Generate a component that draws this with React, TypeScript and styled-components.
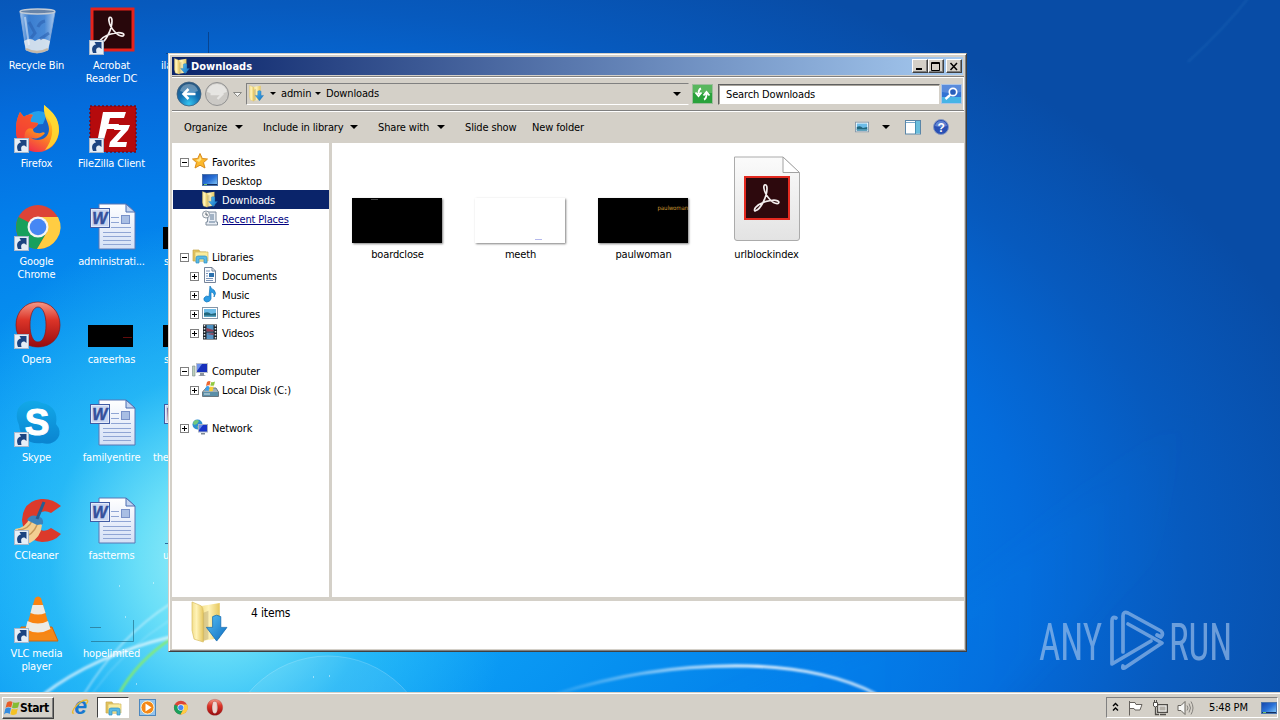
import React from "react";
import type { ReactNode } from "react";
import styled, { createGlobalStyle, css } from "styled-components";

const FACE = "#d4d0c8";
const NAVY = "#0a246a";

const GlobalStyle = createGlobalStyle`
  * {
    box-sizing: border-box;
  }
  body {
    margin: 0;
    overflow: hidden;
    font-family: "DejaVu Sans Condensed", "DejaVu Sans", sans-serif;
    font-stretch: condensed;
    font-size: 11px;
    letter-spacing: -0.15px;
    color: #000;
  }
  svg {
    display: block;
    flex: none;
    overflow: visible;
  }
`;

const raised = css`
  border: 1px solid;
  border-color: #fff #404040 #404040 #fff;
  box-shadow: inset -1px -1px 0 #808080;
`;

/* ---------- desktop ---------- */

const Screen = styled.div`
  position: relative;
  width: 1280px;
  height: 720px;
  overflow: hidden;
  display: flex;
  flex-direction: column;
  background:
    radial-gradient(ellipse 300px 340px at 215px 560px, rgba(165, 242, 248, 0.95) 0%, rgba(120, 232, 248, 0.85) 25%, rgba(60, 206, 246, 0.5) 55%, rgba(20, 170, 245, 0) 100%),
    radial-gradient(ellipse 1150px 660px at 220px 560px, #24b0f6 0%, #0ea2f8 20%, #0690f0 38%, #037eea 55%, #046cdc 70%, #075abe 84%, #084ca6 100%);
`;

const Wallpaper = styled.svg`
  position: absolute;
  left: 0;
  top: 0;
`;

const IconGrid = styled.div`
  position: relative;
  flex: 1;
  display: grid;
  grid-template-columns: repeat(3, 75px);
  grid-template-rows: repeat(7, 98px);
  grid-auto-flow: column;
  margin-left: -1px;
`;

const Shortcut = styled.div<{ $edge?: boolean }>`
  position: relative;
  display: flex;
  flex-direction: column;
  align-items: ${(p) => (p.$edge ? "flex-start" : "center")};
  padding-top: 7px;
  min-height: 0;
`;

const ShortcutArt = styled.div<{ $indent?: number }>`
  position: relative;
  width: 48px;
  height: 48px;
  margin-left: ${(p) => p.$indent ?? 0}px;
`;

const ShortcutLabel = styled.div<{ $indent?: number }>`
  margin-top: 4px;
  margin-left: ${(p) => p.$indent ?? 0}px;
  color: #fff;
  line-height: 13px;
  text-align: center;
  white-space: pre-line;
`;

const Overlay = styled.svg`
  position: absolute;
  left: 1px;
  bottom: 0;
`;

const Watermark = styled.svg`
  position: absolute;
  left: 1036px;
  top: 606px;
`;

/* ---------- window ---------- */

const Window = styled.section`
  position: absolute;
  left: 168px;
  top: 53px;
  width: 799px;
  height: 599px;
  display: flex;
  flex-direction: column;
  padding: 3px 2px 2px 3px;
  background: ${FACE};
  border: 1px solid;
  border-color: ${FACE} #404040 #404040 ${FACE};
  box-shadow: inset 1px 1px 0 #fff, inset -1px -1px 0 #808080;
`;

const TitleBar = styled.header`
  display: flex;
  align-items: center;
  height: 18px;
  margin: 0 1px 1px 0;
  padding: 0 1px 0 2px;
  background: linear-gradient(90deg, ${NAVY}, #a6caf0);
`;

const Title = styled.h1`
  flex: 1;
  margin: 0 0 0 1px;
  font-size: 11px;
  font-weight: bold;
  letter-spacing: 0;
  color: #fff;
`;

const Caption = styled.button<{ $gap?: boolean }>`
  ${raised}
  display: flex;
  align-items: center;
  justify-content: center;
  width: 16px;
  height: 14px;
  padding: 0;
  margin-left: ${(p) => (p.$gap ? 2 : 0)}px;
  background: ${FACE};
`;

const Rebar = styled.div`
  display: flex;
  align-items: center;
  height: 36px;
  padding: 1px 2px 0 5px;
  border-bottom: 1px solid #fff;
  box-shadow: inset 0 1px 0 #808080, inset 0 2px 0 #fff, inset 0 -1px 0 #808080, inset -1px 0 0 #fff;
`;

const NavButtons = styled.div`
  display: flex;
  align-items: center;
  justify-content: space-between;
  width: 65px;
`;

const AddressBar = styled.div`
  display: flex;
  align-items: center;
  width: 443px;
  height: 22px;
  margin-left: 4px;
  padding: 0 7px 1px 2px;
  border: 1px solid;
  border-color: #808080 ${FACE} #fff #808080;
`;

const Crumb = styled.span<{ $w: number }>`
  width: ${(p) => p.$w}px;
  white-space: nowrap;
`;

const Arrow = styled.i<{ $w?: number; $ml?: number; $mr?: number }>`
  width: 0;
  height: 0;
  flex: none;
  margin-left: ${(p) => p.$ml ?? 0}px;
  margin-right: ${(p) => p.$mr ?? 0}px;
  border: ${(p) => p.$w ?? 4}px solid transparent;
  border-top-color: #000;
  border-bottom: 0;
`;

const Spacer = styled.div`
  flex: 1;
`;

const SearchBox = styled.div`
  width: 222px;
  height: 21px;
  margin: 0 1px 0 5px;
  padding: 0 0 0 7px;
  line-height: 20px;
  background: #fff;
  border: 1px solid;
  border-color: #606060 ${FACE} ${FACE} #606060;
  box-shadow: inset 1px 1px 0 #a8a49c;
`;

const CommandBar = styled.div`
  display: flex;
  align-items: center;
  height: 31px;
  padding: 0 15px 1px 12px;
`;

const Command = styled.div<{ $w: number }>`
  display: flex;
  align-items: center;
  justify-content: space-between;
  width: ${(p) => p.$w}px;
  margin-right: 20px;
  white-space: nowrap;
`;

const CommandIcon = styled.div<{ $gap?: number }>`
  margin-left: ${(p) => p.$gap ?? 0}px;
`;

const Body = styled.div`
  display: flex;
  height: 454px;
`;

const Tree = styled.nav`
  width: 157px;
  padding: 9px 0 0 1px;
  background: #fff;
`;

const TreeRow = styled.div<{ $level: number; $active?: boolean; $link?: boolean }>`
  display: flex;
  align-items: center;
  height: 19px;
  padding-left: ${(p) => 7 + p.$level * 10}px;
  color: ${(p) => (p.$active ? "#fff" : p.$link ? "#000080" : "#000")};
  background: ${(p) => (p.$active ? NAVY : "transparent")};
  text-decoration: ${(p) => (p.$link ? "underline" : "none")};
`;

const TreeLabel = styled.span`
  padding-top: 2px;
  white-space: nowrap;
`;

const TreeGap = styled.div`
  height: 19px;
`;

const Toggle = styled.svg`
  width: 9px;
  margin: 1px 3px 0 0;
`;

const TreeIcon = styled.div`
  width: 16px;
  height: 17px;
  margin-right: 4px;
`;

const Divider = styled.div`
  width: 3px;
  background: ${FACE};
`;

const Files = styled.main`
  flex: 1;
  display: grid;
  grid-template-columns: repeat(4, 123px);
  grid-auto-rows: 123px;
  padding: 13px 0 0 4px;
  background: #fff;
`;

const FileItem = styled.div`
  display: flex;
  flex-direction: column;
  align-items: center;
  justify-content: flex-start;
`;

const FileArt = styled.div`
  display: flex;
  align-items: flex-end;
  height: 87px;
  margin-bottom: 5px;
`;

const Thumb = styled.div<{ $bg: string }>`
  position: relative;
  width: 90px;
  height: 45px;
  margin-right: 1px;
  background: ${(p) => p.$bg};
  box-shadow: 1px 1px 2px rgba(0, 0, 0, 0.5);
`;

const ThumbText = styled.span`
  position: absolute;
  right: 0;
  top: 6px;
  color: #c89632;
  font-size: 6px;
  line-height: 7px;
  letter-spacing: -0.1px;
`;

const ThumbLine = styled.i<{ $x: number; $y: number; $color: string }>`
  position: absolute;
  left: ${(p) => p.$x}px;
  top: ${(p) => p.$y}px;
  width: 7px;
  height: 1px;
  background: ${(p) => p.$color};
`;

const Details = styled.footer`
  display: flex;
  height: 48px;
  margin-top: 4px;
  padding-left: 19px;
  background: #fff;
`;

const ItemCount = styled.div`
  margin: 5px 0 0 23px;
  font-size: 12px;
  line-height: 15px;
`;

/* ---------- taskbar ---------- */

const Taskbar = styled.footer`
  position: relative;
  display: flex;
  align-items: center;
  height: 28px;
  padding: 2px 2px 0 2px;
  background: ${FACE};
  border-top: 1px solid ${FACE};
  box-shadow: inset 0 1px 0 #fff;
`;

const StartButton = styled.button`
  ${raised}
  display: flex;
  align-items: center;
  width: 52px;
  height: 22px;
  padding: 0 1px;
  background: ${FACE};
  font: bold 12px "DejaVu Sans Condensed", "DejaVu Sans", sans-serif;
  letter-spacing: -0.4px;
`;

const TaskButton = styled.div<{ $active?: boolean; $w: number }>`
  display: flex;
  align-items: center;
  justify-content: center;
  width: ${(p) => p.$w}px;
  height: 21px;
  ${(p) =>
    p.$active &&
    css`
      background: #fff;
      border: 1px solid;
      border-color: #404040 #fff #fff #404040;
    `}
`;

const Launch = styled.div`
  display: flex;
  align-items: center;
  margin-left: 9px;
`;

const Tray = styled.div`
  display: flex;
  align-items: center;
  width: 172px;
  height: 21px;
  padding-left: 5px;
  border: 1px solid;
  border-color: #808080 #fff #fff #808080;
`;

const Clock = styled.span`
  width: 41px;
  margin: 0 11px 0 15px;
  white-space: nowrap;
`;

/* ---------- icons ---------- */

const Defs = () => (
  <svg width="0" height="0" viewBox="0 0 1 1">
    <defs>
      <linearGradient id="folder" x1="0" x2="1">
        <stop offset="0" stopColor="#f3df8c" />
        <stop offset=".4" stopColor="#fff3b8" />
        <stop offset="1" stopColor="#e6c75e" />
      </linearGradient>
      <linearGradient id="blueArrow" x1="0" y1="0" x2="1" y2="1">
        <stop offset="0" stopColor="#58c0f4" />
        <stop offset="1" stopColor="#0d6cc0" />
      </linearGradient>
      <linearGradient id="red" x1="0" y1="0" x2="0" y2="1">
        <stop offset="0" stopColor="#f49a88" />
        <stop offset=".4" stopColor="#dc3428" />
        <stop offset="1" stopColor="#960c10" />
      </linearGradient>
      <linearGradient id="page" x1="0" y1="0" x2="0" y2="1">
        <stop offset="0" stopColor="#fff" />
        <stop offset="1" stopColor="#d4e0f6" />
      </linearGradient>
      <linearGradient id="grayPage" x1="0" y1="0" x2="0" y2="1">
        <stop offset="0" stopColor="#fbfbfb" />
        <stop offset="1" stopColor="#e3e3e3" />
      </linearGradient>
      <linearGradient id="screenBlue" x1="0" y1="0" x2="1" y2="1">
        <stop offset="0" stopColor="#1544a8" />
        <stop offset=".5" stopColor="#2a72d8" />
        <stop offset="1" stopColor="#8cd0f8" />
      </linearGradient>
      <linearGradient id="skype" x1="0" y1="0" x2="0" y2="1">
        <stop offset="0" stopColor="#12a8e8" />
        <stop offset="1" stopColor="#0a84d0" />
      </linearGradient>
      <linearGradient id="fox" x1="0.8" y1="0" x2="0.3" y2="1">
        <stop offset="0" stopColor="#ffec40" />
        <stop offset=".5" stopColor="#ff9a18" />
        <stop offset="1" stopColor="#f02850" />
      </linearGradient>
      <radialGradient id="navOrb" cx=".5" cy=".9" r=".9">
        <stop offset="0" stopColor="#34c4f0" />
        <stop offset=".5" stopColor="#136eb0" />
        <stop offset="1" stopColor="#2c567c" />
      </radialGradient>
      <linearGradient id="glass" x1="0" x2="1">
        <stop offset="0" stopColor="#d4e6fa" stopOpacity=".8" />
        <stop offset=".25" stopColor="#5c94da" stopOpacity=".6" />
        <stop offset=".7" stopColor="#75a8e4" stopOpacity=".6" />
        <stop offset="1" stopColor="#dcecff" stopOpacity=".8" />
      </linearGradient>
    </defs>
  </svg>
);

const LinkArrow = () => (
  <Overlay width="15" height="15" viewBox="0 0 15 15">
    <rect x=".5" y=".5" width="14" height="14" fill="#e6eef6" stroke="#a8b8cc" />
    <path d="M4 13C2 8.500 3.500 5 7 4.500L5.500 2H12.500V9L10.500 7.500C7.500 7.500 6.500 9 7.500 13Z" fill="#1c4480" />
  </Overlay>
);

const RecycleBin = () => (
  <svg width="48" height="48" viewBox="0 0 48 48">
    <path d="M7 5L13 43Q24 49 35 43L42 5Z" fill="url(#glass)" stroke="#8cacd8" strokeWidth=".8" />
    <path d="M11 34Q17 30 22 34Q28 29 37 34L35 43Q24 48 13 43Z" fill="#e8ecf0" opacity=".85" />
    <path d="M13 42Q24 48 35 42" fill="none" stroke="#c4b8a8" strokeWidth="2.500" />
    <path d="M16 15L22 26L18 31M32 14Q27 15 25 20M36 26L27 32" fill="none" stroke="#2b60b0" strokeWidth="3" opacity=".6" />
    <path d="M12 10L16 38" stroke="#fff" strokeWidth="2" opacity=".45" />
    <ellipse cx="24.500" cy="4.500" rx="17.500" ry="2.500" fill="#6884a8" stroke="#c4ccd6" strokeWidth="1.300" />
  </svg>
);

const AcrobatMark = () => (
  <path
    d="M13 36C17 35 24 23 24 14C24 9 20 9 21 14C22 21 30 30 35 29C38 27 33 25 28 26C20 27 15 30 12.500 33C10.500 36 12 37 13 36Z"
    fill="none"
    stroke="#f4eeee"
    strokeWidth="1.700"
  />
);

const Acrobat = () => (
  <svg width="48" height="48" viewBox="0 0 48 48">
    <rect x="4" y="2" width="41" height="41" fill="#28070b" stroke="#e6231b" strokeWidth="3" />
    <AcrobatMark />
  </svg>
);

const Firefox = () => (
  <svg width="48" height="48" viewBox="0 0 48 48">
    <circle cx="27" cy="23" r="16" fill="#1862c8" />
    <path d="M16 9Q26 3 34 9L30 19L18 20Z" fill="#24a0ec" />
    <path
      d="M31 0C38 6 46 11 46 26C45 39 36 47 25 47C13 47 3 39 3 26C3 18 4 13 7 7L11 12C13 10 16 9 20 10C18 13 17 15 18 17L25 18C25 21 22 22 20 24C20 27 22 28 25 28C29 29 29 26 32 28C27 35 19 34 17 32C23 38 36 35 36 24C36 17 30 12 31 0Z"
      fill="url(#fox)"
    />
    <path d="M3 26C3 18 4 13 7 7L11 12C13 10 16 9 20 10C18 13 17 15 18 17L25 18C25 21 22 22 20 24C14 21 10 28 12 36Q13 42 21 46C9 44 3 36 3 26Z" fill="#f23b34" opacity=".8" />
    <path d="M31 0C37 6 46 11 46 26C45 36 39 43 32 45C39 36 42 23 36 15Q31 10 31 0Z" fill="#ffdc32" opacity=".85" />
  </svg>
);

const FileZilla = () => (
  <svg width="48" height="48" viewBox="0 0 48 48">
    <rect x="2" y="1" width="46" height="46" fill="#b50a0c" stroke="#700c20" strokeWidth="1.500" strokeDasharray="2 2" />
    <path d="M15 7H38L36 13H22L20.500 19H31L29.500 24H19L15 38H9Z" fill="#fff" />
    <path d="M27 20H42L40 25L29 37H39L38 42H21L22 37L33 25H26Z" fill="#fff" />
  </svg>
);

const Chrome = ({ size = 48 }: { size?: number }) => (
  <svg width={size} height={size} viewBox="0 0 48 48">
    <circle cx="25" cy="24" r="22" fill="#dc4437" />
    <path d="M25 24L5.500 14A22 22 0 0 0 24 46L34 29Z" fill="#18a05c" />
    <path d="M25 14H45A22 22 0 0 1 24 46L34 29Z" fill="#ffcd42" />
    <circle cx="25" cy="24" r="10.500" fill="#f4f4f4" />
    <circle cx="25" cy="24" r="8.300" fill="#4687f4" />
  </svg>
);

const Opera = ({ size = 48 }: { size?: number }) => (
  <svg width={size} height={size} viewBox="0 0 48 48">
    <path
      fillRule="evenodd"
      d="M25 1C38 1 47 11 47 24S38 46 25 46S3 37 3 24S12 1 25 1ZM25 6C20 6 17 14 17 24S20 41 25 41S33 34 33 24S30 6 25 6Z"
      fill="url(#red)"
      stroke="#8c1414"
      strokeWidth=".7"
    />
    {size < 30 && <rect x="20" y="9" width="9" height="29" fill="#f5d4d0" />}
  </svg>
);

const WordDoc = () => (
  <svg width="48" height="48" viewBox="0 0 48 48">
    <path d="M11 1H38L47 9V46H11Z" fill="url(#page)" stroke="#5a76b4" />
    <path d="M38 1V9H47Z" fill="#c4d5f0" stroke="#4a6cb0" />
    <path d="M23 14.500H31M23 19.500H31M23 24.500H43M15 29.500H43M15 33.500H43M15 37.500H43M15 41.500H43" stroke="#8fa5d4" />
    <rect x="33.500" y="12.500" width="8" height="8" fill="#a8bee4" stroke="#7891c8" />
    <rect x="2.500" y="5.500" width="19" height="19" fill="#e4ebfa" stroke="#405ca4" />
    <rect x="4" y="7" width="16" height="16" fill="#c9d5f0" />
    <text x="11.800" y="21" textAnchor="middle" fontFamily="Liberation Sans, sans-serif" fontSize="16" fontWeight="bold" fontStyle="italic" fill="#34509c" stroke="#34509c" strokeWidth=".5">
      W
    </text>
  </svg>
);

const BlackClip = () => (
  <svg width="48" height="48" viewBox="0 0 48 48">
    <rect x="0" y="24" width="45" height="22" fill="#000" />
    <path d="M35 36.500H44" stroke="#620c0c" />
  </svg>
);

const GhostClip = ({ light }: { light?: boolean }) => (
  <svg width="48" height="48" viewBox="0 0 48 48">
    <path d="M3 46.500H45.500V25" fill="none" stroke={light ? "#24708c" : "#083878"} strokeOpacity=".7" />
    {light && <path d="M2 32.500H13" stroke="#2f88a8" />}
  </svg>
);

const Skype = () => (
  <svg width="48" height="48" viewBox="0 0 48 48">
    <path d="M16 2Q24 1 29 4C41 6 45 15 43 25Q49 32 45 39Q39 47 29 44C16 46 7 38 6 26Q2 18 5 10Q9 3 16 2Z" fill="url(#skype)" />
    <text x="24" y="36" textAnchor="middle" fontFamily="Liberation Sans, sans-serif" fontWeight="bold" fontSize="37" fill="#fff" stroke="#fff">
      S
    </text>
  </svg>
);

const CCleaner = () => (
  <svg width="48" height="48" viewBox="0 0 48 48">
    <path d="M48 9Q39 1 28 2Q10 4 9 23Q11 43 29 45Q41 45 48 37L38 31Q30 37 24 30Q20 23 25 17Q31 12 38 16Z" fill="#dc3a2b" />
    <path d="M2 32Q13 31 17 20L29 28Q28 40 17 46Q5 45 2 32Z" fill="#f3cf91" />
    <path d="M5 33Q15 33 19 24M9 41Q20 38 24 28" fill="none" stroke="#c89858" strokeWidth="1.500" />
    <path d="M14 23Q17 17 24 19Q31 20 30 27L24 28Z" fill="#3b83bc" />
    <path d="M24 22L31 5" stroke="#275d90" strokeWidth="3" />
  </svg>
);

const Vlc = () => (
  <svg width="48" height="48" viewBox="0 0 48 48">
    <path d="M8 32H39L45 46H5Z" fill="#f48818" stroke="#cd6710" />
    <path d="M22 3Q25 0 28 3L38 37Q25 43 12 37Z" fill="#f98412" />
    <path d="M19.500 10H30L32.500 18Q25 21 17.500 18ZM14.500 26Q25 31 35 26L37.500 34Q25 41 12.500 34Z" fill="#ecebe6" />
  </svg>
);

const DownloadFolder = ({ w = 16, h = 17 }: { w?: number; h?: number }) => (
  <svg width={w} height={h} viewBox="0 0 36 44" preserveAspectRatio="none">
    <path d="M10 5L28 2V38L10 41Z" fill="url(#folder)" />
    <path d="M1 1L10 5Q12 7 12 12V42L3 39L1 30Z" fill="url(#folder)" stroke="#d9bd60" strokeWidth=".7" />
    <path d="M17 39V10L12 12V41Z" fill="#a4905c" opacity=".35" />
    <path d="M21 16Q25 13 29 16V27H35L25 41L15 27H21Z" fill="url(#blueArrow)" stroke="#0c66ae" strokeWidth=".7" />
  </svg>
);

const LibraryFolder = () => (
  <svg width="17" height="16" viewBox="0 0 17 16">
    <path d="M1 2H7L8 4H14V13H1Z" fill="#e4c35c" stroke="#c6a64c" strokeWidth=".7" />
    <path d="M3 4H16V13H3Z" fill="#fbec9c" stroke="#d2b860" strokeWidth=".7" />
    <path d="M4 15V10Q4 8 6 8H13Q15 8 15 10V15H12V11H7V15Z" fill="#5ab9e4" stroke="#2d8fc4" strokeWidth=".7" />
  </svg>
);

const Monitor = () => (
  <svg width="16" height="16" viewBox="0 0 16 16">
    <rect x=".5" y="2.500" width="15" height="11" fill="url(#screenBlue)" stroke="#4a74ac" />
    <path d="M1 12H15V13H1Z" fill="#122e60" />
    <path d="M2 12.500H5" stroke="#6fc46c" />
  </svg>
);

const Star = () => (
  <svg width="16" height="16" viewBox="0 0 16 16">
    <path d="M8 .5L10.300 5.500L15.500 6L11.500 9.600L13 15L8 12.200L3 15L4.500 9.600L.5 6L5.700 5.500Z" fill="#fcb92c" stroke="#d98c1e" />
    <path d="M8 3L9.500 6.500L7 9L4 7L7 6Z" fill="#fff0a4" opacity=".8" />
  </svg>
);

const Recent = () => (
  <svg width="16" height="16" viewBox="0 0 16 16">
    <path d="M6 2H14V12H15.500V15H4V12H5.500Z" fill="#e8edf4" stroke="#7e8c9c" />
    <path d="M8 5H12M8 7H12M8 9H12M7 12H13" stroke="#5d7896" />
    <circle cx="4" cy="4.500" r="3.500" fill="#f4f4f4" stroke="#8d98a4" />
    <path d="M4 2.500V5H6" fill="none" stroke="#54606c" />
  </svg>
);

const DocumentIcon = () => (
  <svg width="16" height="16" viewBox="0 0 16 16">
    <path d="M2.500 .5H10L13.500 4V15.500H2.500Z" fill="#fbfcfe" stroke="#758398" />
    <path d="M10 .5V4H13.500" fill="none" stroke="#758398" />
    <path d="M4 4H8M4 6.500H6M4 9H6M4 11.500H11M4 13.500H11" stroke="#7c94b8" />
    <rect x="7" y="6" width="5" height="4" fill="#2d71ae" />
  </svg>
);

const MusicIcon = () => (
  <svg width="16" height="16" viewBox="0 0 16 16">
    <path d="M8 0Q9 3 12 4Q15 7 12 11Q13 7 9 6V13Q8 16 4.500 16Q1 15 2 12Q4 9 7 10.500Z" fill="#2b9be4" stroke="#1477bc" strokeWidth=".7" />
  </svg>
);

const PictureIcon = ({ w = 16 }: { w?: number }) => (
  <svg width={w} height={w} viewBox="0 0 16 16">
    <rect x=".5" y="2.500" width="15" height="11" fill="#fff" stroke="#8496a8" />
    <rect x="2" y="4" width="12" height="8" fill="#6cbce8" />
    <path d="M2 8Q6 6 9 9L14 8V12H2Z" fill="#21667c" />
    <path d="M2 10.500H14V12H2Z" fill="#58a2c0" />
  </svg>
);

const VideoIcon = () => (
  <svg width="16" height="16" viewBox="0 0 16 16">
    <rect x="1" y=".5" width="14" height="15" fill="#1c2228" />
    <path d="M2.500 1V15M13.500 1V15" stroke="#e2e8ec" strokeWidth="1.500" strokeDasharray="1.500 1.500" />
    <rect x="4.500" y="1" width="7" height="6.500" fill="#4d90c0" />
    <rect x="4.500" y="8.500" width="7" height="6.500" fill="#5794c4" />
    <path d="M4.500 4L11.500 6V7.500H4.500ZM4.500 10L11.500 9V11Z" fill="#953e50" />
  </svg>
);

const ComputerIcon = () => (
  <svg width="16" height="16" viewBox="0 0 16 16">
    <path d="M.5 4H3V14H.5Z" fill="#bcd0b8" stroke="#78888c" strokeWidth=".6" />
    <rect x="4.500" y="1.500" width="11" height="9" fill="#1730bc" stroke="#b9c0cc" />
    <path d="M5 2H10L5 9Z" fill="#6f92ec" />
    <path d="M8 11H12V13L14 14H6L8 13Z" fill="#8c949f" />
  </svg>
);

const DiskIcon = () => (
  <svg width="17" height="17" viewBox="0 0 17 17">
    <path d="M.5 11L4 7H14L16.500 11V15.500H.5Z" fill="#a3b1b8" stroke="#697780" />
    <path d="M1 11H16V15H1Z" fill="#5b8fa8" />
    <path d="M2 13H8" stroke="#d3e4ea" />
    <path d="M5 1Q7 -.5 8.500 .5L7.500 4.500Q6 4 4 5Z" fill="#ec6830" />
    <path d="M9.300 1Q11 1.500 13 .5L12 4.500Q10 5 8.300 4.500Z" fill="#92c940" />
    <path d="M4 5.500Q6 4.500 7.300 5.500L6.500 10Q5 9 3 10Z" fill="#3ba0e8" />
    <path d="M8 5.500Q10 6 11.700 5.500L10.700 10Q9 10.500 7.200 10Z" fill="#f8cc36" />
  </svg>
);

const NetworkIcon = () => (
  <svg width="17" height="16" viewBox="0 0 17 16">
    <circle cx="5.500" cy="5.500" r="5" fill="#2e8fd0" />
    <path d="M2 2Q5 0 7 2L5 5L2 6L1 4ZM5 7L8 8L6 10Z" fill="#73c87c" />
    <rect x="6.500" y="5.500" width="9" height="7.500" fill="#1834c8" stroke="#a8b2c4" />
    <path d="M7 6H11L7 11Z" fill="#6a90e8" />
    <path d="M9 14H13V15.500H9Z" fill="#7c8894" />
  </svg>
);

const WindowsFlag = () => (
  <svg width="16" height="16" viewBox="0 0 16 16">
    <path d="M3 2.500Q6 .5 8.500 2L7.200 7.500Q4 6 1.500 8Z" fill="#e85c28" />
    <path d="M9.300 2.300Q12 3.500 15.500 2L14 7.500Q11 9 8 7.800Z" fill="#85bc34" />
    <path d="M1.300 8.700Q4 6.700 7 8.300L5.700 14Q2.500 12 0 14.500Z" fill="#348ce0" />
    <path d="M7.800 8.700Q11 10 13.800 8.400L12.500 14Q9 16 6.400 14.300Z" fill="#f4c124" />
  </svg>
);

const Explorer = () => (
  <svg width="17" height="17" viewBox="0 0 17 17">
    <text x="8.500" y="14.500" textAnchor="middle" fontFamily="Liberation Sans, sans-serif" fontWeight="bold" fontStyle="italic" fontSize="23" fill="#1877d0">
      e
    </text>
    <path d="M2 14Q-1 15 2 9.500Q8 1 15 1Q17 2 14 5" fill="none" stroke="#e9b92e" strokeWidth="1.300" />
  </svg>
);

const PlayerIcon = () => (
  <svg width="17" height="17" viewBox="0 0 17 17">
    <rect x=".5" y=".5" width="16" height="16" fill="#95c3ec" stroke="#4c87be" />
    <circle cx="8.500" cy="8.500" r="6.500" fill="#f48717" stroke="#fff0c8" />
    <path d="M6.500 4.500L12.500 8.500L6.500 12.500Z" fill="#fff" />
  </svg>
);

const BackButton = () => (
  <svg width="24" height="24" viewBox="0 0 24 24">
    <circle cx="12" cy="12" r="12" fill="url(#navOrb)" stroke="#40607c" strokeWidth=".8" />
    <path d="M3 9Q5 2 12 2T21 9Q12 13 3 9" fill="#fff" opacity=".3" />
    <path d="M18.500 12H7M11.500 7L6.500 12L11.500 17" fill="none" stroke="#fff" strokeWidth="2.500" />
  </svg>
);

const ForwardButton = () => (
  <svg width="24" height="24" viewBox="0 0 24 24">
    <circle cx="12" cy="12" r="11.500" fill="#cbc9c5" stroke="#929292" />
    <path d="M2 10Q4 2 12 2T22 10Q12 14 2 10" fill="#efefed" opacity=".7" />
    <path d="M5.500 12H17M12.500 7L17.500 12L12.500 17" fill="none" stroke="#e6e5e2" strokeWidth="2.300" />
  </svg>
);

const RefreshButton = () => (
  <svg width="21" height="20" viewBox="0 0 21 20">
    <rect x=".5" y=".5" width="20" height="19" fill="#29a23b" stroke="#9ebd9c" />
    <rect x="1" y="1" width="19" height="8" fill="#7fc87c" opacity=".55" />
    <path d="M9 4.500Q6.500 5.500 6.500 10M3.500 8.500L6.500 12L9.500 8.500M12 15.500Q14.500 14.500 14.500 10M11.500 11.500L14.500 8L17.500 11.500" fill="none" stroke="#fff" strokeWidth="1.900" />
  </svg>
);

const SearchButton = () => (
  <svg width="21" height="20" viewBox="0 0 21 20">
    <rect x=".5" y=".5" width="20" height="19" fill="#3273d4" stroke="#abc4e6" />
    <path d="M1 13H20V19H1Z" fill="#46b4e6" />
    <path d="M1 1H20V8Q10 10 1 8Z" fill="#7fa4e4" opacity=".5" />
    <circle cx="12" cy="8" r="3.700" fill="#285ebc" stroke="#fff" strokeWidth="1.700" />
    <path d="M9.200 10.800L4.500 15" stroke="#fff" strokeWidth="2.400" />
  </svg>
);

const PaneIcon = () => (
  <svg width="16" height="15" viewBox="0 0 16 15">
    <rect x=".5" y=".5" width="15" height="13.500" fill="#fff" stroke="#5a86a8" />
    <path d="M1 2.500H10" stroke="#78a8cc" />
    <rect x="10" y="1" width="5" height="12.500" fill="#6abedd" />
    <path d="M10.500 1V14" stroke="#4590b4" />
  </svg>
);

const HelpIcon = () => (
  <svg width="16" height="16" viewBox="0 0 16 16">
    <circle cx="8" cy="8" r="7.500" fill="#2a50b4" stroke="#8799c2" />
    <path d="M2 7Q3 2 8 2T14 7Q8 9 2 7" fill="#89a5e4" opacity=".6" />
    <text x="8" y="12.500" textAnchor="middle" fontFamily="Liberation Sans, sans-serif" fontWeight="bold" fontSize="12" fill="#fff">
      ?
    </text>
  </svg>
);

const PdfPage = () => (
  <svg width="68" height="87" viewBox="0 0 68 87">
    <path d="M1.500 1H50L66.500 17V82Q66.500 84.500 64 84.500H4Q1.500 84.500 1.500 82Z" fill="url(#grayPage)" stroke="#ababab" />
    <path d="M50 1V16.500H66.500Z" fill="#fff" stroke="#a2a2a2" />
    <rect x="12" y="21" width="44" height="42" fill="#2d090d" stroke="#e42a20" strokeWidth="2" />
    <g transform="translate(10 18.500)">
      <AcrobatMark />
    </g>
  </svg>
);

const TrayIcons = () => (
  <>
    <svg width="7" height="10" viewBox="0 0 7 10">
      <path d="M1 3L3.500 .5L6 3M1 7.500L3.500 5L6 7.500" fill="none" stroke="#000" strokeWidth="1.400" />
    </svg>
    <Spacer />
    <svg width="16" height="16" viewBox="0 0 16 16">
      <path d="M2.500 1V15.500M2.500 2.500H8L9 4.500H15L13 10H8L7 8.500H2.500" fill="#fff" stroke="#66625d" />
    </svg>
    <Spacer />
    <svg width="17" height="16" viewBox="0 0 17 16">
      <rect x="5.500" y="4.500" width="10" height="8" fill="#aaa7a0" stroke="#514e4a" />
      <path d="M7 6H14V11H7Z" fill="#b4b0a8" stroke="#fff" strokeWidth=".8" />
      <path d="M8 14.500H14M3.500 7V14.500H7" fill="none" stroke="#514e4a" strokeWidth="1.300" />
      <path d="M1.500 2.500H5.500V6Q3.500 8 1.500 6ZM2.500 0V2M4.500 0V2" fill="#fff" stroke="#514e4a" />
    </svg>
    <Spacer />
    <svg width="17" height="16" viewBox="0 0 17 16">
      <path d="M1 5.500H4L8 1.500V14.500L4 10.500H1Z" fill="#f8f8f6" stroke="#68655f" />
      <path d="M10 5.500Q12 8 10 10.500M12 3.500Q15 8 12 12.500M14 1.500Q18 8 14 14.500" fill="none" stroke="#85827d" />
    </svg>
  </>
);

/* ---------- data ---------- */

type DesktopEntry = {
  label: string;
  art?: ReactNode;
  link?: boolean;
  artIndent?: number;
  labelIndent?: number;
};

const DESKTOP: DesktopEntry[] = [
  { label: "Recycle Bin", art: <RecycleBin /> },
  { label: "Firefox", art: <Firefox />, link: true },
  { label: "Google\nChrome", art: <Chrome />, link: true },
  { label: "Opera", art: <Opera />, link: true },
  { label: "Skype", art: <Skype />, link: true },
  { label: "CCleaner", art: <CCleaner />, link: true },
  { label: "VLC media\nplayer", art: <Vlc />, link: true },
  { label: "Acrobat\nReader DC", art: <Acrobat />, link: true },
  { label: "FileZilla Client", art: <FileZilla />, link: true },
  { label: "administrati...", art: <WordDoc /> },
  { label: "careerhas", art: <BlackClip /> },
  { label: "familyentire", art: <WordDoc /> },
  { label: "fastterms", art: <WordDoc /> },
  { label: "hopelimited", art: <GhostClip light /> },
  { label: "ila", art: <GhostClip />, artIndent: 14, labelIndent: 12 },
  { label: "" },
  { label: "s", art: <BlackClip />, artIndent: 14, labelIndent: 15 },
  { label: "s", art: <BlackClip />, artIndent: 14, labelIndent: 15 },
  { label: "the", art: <WordDoc />, artIndent: 13, labelIndent: 4 },
  { label: "u", art: <GhostClip />, artIndent: 13, labelIndent: 14 },
  { label: "" },
];

type TreeEntry = {
  label: string;
  icon: ReactNode;
  level: number;
  toggle?: "plus" | "minus";
  active?: boolean;
  link?: boolean;
};

const TREE: (TreeEntry | null)[] = [
  { label: "Favorites", icon: <Star />, level: 0, toggle: "minus" },
  { label: "Desktop", icon: <Monitor />, level: 1 },
  { label: "Downloads", icon: <DownloadFolder />, level: 1, active: true },
  { label: "Recent Places", icon: <Recent />, level: 1, link: true },
  null,
  { label: "Libraries", icon: <LibraryFolder />, level: 0, toggle: "minus" },
  { label: "Documents", icon: <DocumentIcon />, level: 1, toggle: "plus" },
  { label: "Music", icon: <MusicIcon />, level: 1, toggle: "plus" },
  { label: "Pictures", icon: <PictureIcon />, level: 1, toggle: "plus" },
  { label: "Videos", icon: <VideoIcon />, level: 1, toggle: "plus" },
  null,
  { label: "Computer", icon: <ComputerIcon />, level: 0, toggle: "minus" },
  { label: "Local Disk (C:)", icon: <DiskIcon />, level: 1, toggle: "plus" },
  null,
  { label: "Network", icon: <NetworkIcon />, level: 0, toggle: "plus" },
];

const COMMANDS = [
  { label: "Organize", width: 59, menu: true },
  { label: "Include in library", width: 95, menu: true },
  { label: "Share with", width: 67, menu: true },
  { label: "Slide show", width: 47 },
  { label: "New folder", width: 52 },
];

const TreeToggle = ({ kind }: { kind?: "plus" | "minus" }) => (
  <Toggle height="9" viewBox="0 0 9 9">
    {kind && <rect x=".5" y=".5" width="8" height="8" fill="#fff" stroke="#808080" />}
    {kind && <path d={kind === "plus" ? "M2 4.500H7M4.500 2V7" : "M2 4.500H7"} stroke="#000" />}
  </Toggle>
);

const Background = () => (
  <Wallpaper width="1280" height="720" viewBox="0 0 1280 720" fill="none">
    <defs>
      <filter id="soft" x="-20%" y="-20%" width="140%" height="140%">
        <feGaussianBlur stdDeviation="1.200" />
      </filter>
      <filter id="haze" x="-20%" y="-20%" width="140%" height="140%">
        <feGaussianBlur stdDeviation="12" />
      </filter>
      <linearGradient id="streak" x1="0" x2="1">
        <stop offset="0" stopColor="#fff" stopOpacity=".1" />
        <stop offset=".6" stopColor="#fff" stopOpacity=".85" />
        <stop offset="1" stopColor="#fff" stopOpacity=".7" />
      </linearGradient>
      <linearGradient id="rays" x1="0" x2="1">
        <stop offset="0" stopColor="#1a8cf4" stopOpacity=".2" />
        <stop offset="1" stopColor="#1a8cf4" stopOpacity="0" />
      </linearGradient>
    </defs>
    <path d="M700 720L960 600L1200 400L1150 560L960 740Z" fill="url(#rays)" filter="url(#haze)" />
    <circle cx="328" cy="760" r="104" fill="#fff" fillOpacity=".08" stroke="#fff" strokeOpacity=".2" />
    <g filter="url(#soft)">
      <path d="M44 694Q94 656 170 637" stroke="#fff" strokeOpacity=".65" strokeWidth="3" />
      <path d="M84 694Q120 636 170 604" stroke="#fff" strokeOpacity=".5" strokeWidth="1.500" />
      <path d="M92 694Q125 648 170 620" stroke="#fff" strokeOpacity=".35" />
      <path d="M119 694Q136 662 172 638" stroke="#8cf060" strokeOpacity=".9" strokeWidth="2.500" />
      <path d="M556 694Q650 664 748 666Q825 668 876 694" stroke="url(#streak)" strokeWidth="3" />
      <path d="M1188 62Q1225 28 1250 -4" stroke="#3c88cc" strokeOpacity=".2" strokeWidth="2" />
    </g>
    <path d="M119 586h1M153 583h1M136 684h1M125 617h1M313 677h1M329 676h1" stroke="#fff" strokeOpacity=".6" strokeWidth="1.500" />
  </Wallpaper>
);

const AnyRunMark = () => (
  <Watermark width="200" height="70" viewBox="0 0 200 70">
    <g fill="#a9c8ee" opacity=".62" fontFamily="Roboto, sans-serif" fontSize="52">
      <text x="3" y="53.500" textLength="63" lengthAdjust="spacingAndGlyphs">
        ANY
      </text>
      <text x="133" y="53.500" textLength="63" lengthAdjust="spacingAndGlyphs">
        RUN
      </text>
    </g>
    <g fill="none" stroke="#a9c8ee" opacity=".6" strokeWidth="3.700" strokeLinejoin="round" strokeLinecap="round">
      <path d="M80 12Q76 10 76 15V58L115 35" />
      <path d="M87 46V10Q87 5 92 7L125 25Q128 28 125 31L121 29" />
      <path d="M92 18L126 37L90 61Q86 64 87 60" />
    </g>
  </Watermark>
);

export default function App() {
  return (
    <Screen>
      <GlobalStyle />
      <Background />
      <IconGrid>
        {DESKTOP.map((entry, i) => (
          <Shortcut key={i} $edge={entry.labelIndent !== undefined}>
            <ShortcutArt $indent={entry.artIndent}>
              {entry.art}
              {entry.link && <LinkArrow />}
            </ShortcutArt>
            <ShortcutLabel $indent={entry.labelIndent}>{entry.label}</ShortcutLabel>
          </Shortcut>
        ))}
      </IconGrid>
      <AnyRunMark />

      <Window>
        <TitleBar>
          <DownloadFolder />
          <Title>Downloads</Title>
          <Caption aria-label="Minimize">
            <svg width="10" height="9" viewBox="0 0 10 9">
              <path d="M1 7H7" stroke="#000" strokeWidth="2" />
            </svg>
          </Caption>
          <Caption aria-label="Maximize">
            <svg width="10" height="9" viewBox="0 0 10 9">
              <path d="M.5 .5H8.500V8.500H.5ZM0 1.500H9" fill="none" stroke="#000" />
            </svg>
          </Caption>
          <Caption aria-label="Close" $gap>
            <svg width="10" height="9" viewBox="0 0 10 9">
              <path d="M1.500 1L8 8M8 1L1.500 8" stroke="#000" strokeWidth="1.500" />
            </svg>
          </Caption>
        </TitleBar>

        <Rebar>
          <NavButtons>
            <BackButton />
            <ForwardButton />
            <svg width="9" height="5" viewBox="0 0 9 5">
              <path d="M.5 .5H8.500L4.500 4.500Z" fill="#f4f4f2" stroke="#8a8a86" />
            </svg>
          </NavButtons>
          <AddressBar>
            <DownloadFolder w={15} h={17} />
            <Arrow $w={3} $ml={6} $mr={5} />
            <Crumb $w={33}>admin</Crumb>
            <Arrow $w={3} $ml={1} $mr={5} />
            <Crumb $w={60}>Downloads</Crumb>
            <Spacer />
            <Arrow />
          </AddressBar>
          <Spacer />
          <RefreshButton />
          <SearchBox>Search Downloads</SearchBox>
          <SearchButton />
        </Rebar>

        <CommandBar>
          {COMMANDS.map((c) => (
            <Command key={c.label} $w={c.width}>
              {c.label}
              {c.menu && <Arrow />}
            </Command>
          ))}
          <Spacer />
          <PictureIcon w={14} />
          <Arrow $ml={13} $mr={15} />
          <PaneIcon />
          <CommandIcon $gap={12}>
            <HelpIcon />
          </CommandIcon>
        </CommandBar>

        <Body>
          <Tree>
            {TREE.map((row, i) =>
              row ? (
                <TreeRow key={row.label} $level={row.level} $active={row.active} $link={row.link}>
                  <TreeToggle kind={row.toggle} />
                  <TreeIcon>{row.icon}</TreeIcon>
                  <TreeLabel>{row.label}</TreeLabel>
                </TreeRow>
              ) : (
                <TreeGap key={i} />
              )
            )}
          </Tree>
          <Divider />
          <Files>
            <FileItem>
              <FileArt>
                <Thumb $bg="#000">
                  <ThumbLine $x={19} $y={1} $color="#444" />
                </Thumb>
              </FileArt>
              boardclose
            </FileItem>
            <FileItem>
              <FileArt>
                <Thumb $bg="#fff">
                  <ThumbLine $x={60} $y={41} $color="#b4b8ec" />
                </Thumb>
              </FileArt>
              meeth
            </FileItem>
            <FileItem>
              <FileArt>
                <Thumb $bg="#000">
                  <ThumbText>paulwoman</ThumbText>
                </Thumb>
              </FileArt>
              paulwoman
            </FileItem>
            <FileItem>
              <FileArt>
                <PdfPage />
              </FileArt>
              urlblockindex
            </FileItem>
          </Files>
        </Body>

        <Details>
          <DownloadFolder w={37} h={43} />
          <ItemCount>4 items</ItemCount>
        </Details>
      </Window>

      <Taskbar>
        <StartButton>
          <WindowsFlag />
          Start
        </StartButton>
        <Launch>
          <TaskButton $w={34}>
            <Explorer />
          </TaskButton>
          <TaskButton $active $w={32}>
            <LibraryFolder />
          </TaskButton>
          <TaskButton $w={36}>
            <PlayerIcon />
          </TaskButton>
          <TaskButton $w={31}>
            <Chrome size={15} />
          </TaskButton>
          <TaskButton $w={36}>
            <Opera size={17} />
          </TaskButton>
        </Launch>
        <Spacer />
        <Tray>
          <TrayIcons />
          <Clock>5:48 PM</Clock>
          <Monitor />
        </Tray>
      </Taskbar>
      <Defs />
    </Screen>
  );
}
